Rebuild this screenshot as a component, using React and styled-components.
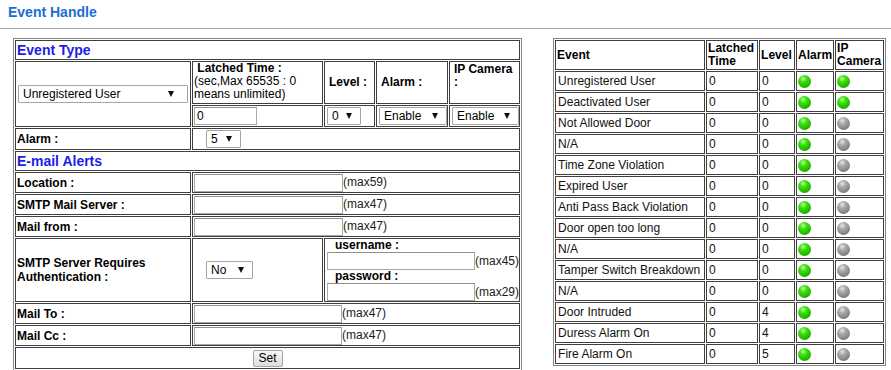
import React from "react";
import styled, { createGlobalStyle } from "styled-components";

const events = [
  { name: "Unregistered User", time: 0, level: 0, alarm: true, camera: true },
  { name: "Deactivated User", time: 0, level: 0, alarm: true, camera: true },
  { name: "Not Allowed Door", time: 0, level: 0, alarm: true, camera: false },
  { name: "N/A", time: 0, level: 0, alarm: true, camera: false },
  { name: "Time Zone Violation", time: 0, level: 0, alarm: true, camera: false },
  { name: "Expired User", time: 0, level: 0, alarm: true, camera: false },
  { name: "Anti Pass Back Violation", time: 0, level: 0, alarm: true, camera: false },
  { name: "Door open too long", time: 0, level: 0, alarm: true, camera: false },
  { name: "N/A", time: 0, level: 0, alarm: true, camera: false },
  { name: "Tamper Switch Breakdown", time: 0, level: 0, alarm: true, camera: false },
  { name: "N/A", time: 0, level: 0, alarm: true, camera: false },
  { name: "Door Intruded", time: 0, level: 4, alarm: true, camera: false },
  { name: "Duress Alarm On", time: 0, level: 4, alarm: true, camera: false },
  { name: "Fire Alarm On", time: 0, level: 5, alarm: true, camera: false },
];

const mailFields = [
  { label: "Location :", max: 59 },
  { label: "SMTP Mail Server :", max: 47 },
  { label: "Mail from :", max: 47 },
];

const FakeSelect = ({ value, width, padRight, offset }) => (
  <SelectBox $w={width} $pr={padRight} $ml={offset}>
    <span>{value}</span>
    <Arrow />
  </SelectBox>
);

const App = () => {
  return (
    <>
      <GlobalStyle />
      <Header>
        <Title>Event Handle</Title>
      </Header>

      <Content>
        <FormTable>
          <colgroup>
            <col style={{ width: 176 }} />
            <col style={{ width: 131 }} />
            <col style={{ width: 51 }} />
            <col style={{ width: 72 }} />
            <col style={{ width: 71 }} />
          </colgroup>
          <tbody>
            <Row $h={20}>
              <SectionCell colSpan={5}>Event Type</SectionCell>
            </Row>
            <Row $h={43}>
              <Cell rowSpan={2}>
                <FakeSelect value="Unregistered User" width={170} padRight={13} offset={1} />
              </Cell>
              <HeadCell $top $plain>
                <Bold>&nbsp;Latched Time :</Bold>
                <br />
                (sec,Max 65535 : 0 means unlimited)
              </HeadCell>
              <HeadCell>Level :</HeadCell>
              <HeadCell>Alarm :</HeadCell>
              <HeadCell $top>IP Camera :</HeadCell>
            </Row>
            <Row $h={22}>
              <Cell>
                <TextInput $w={63} $h={18} defaultValue="0" />
              </Cell>
              <Cell>
                <FakeSelect value="0" width={34} padRight={8} offset={1} />
              </Cell>
              <Cell>
                <FakeSelect value="Enable" width={68} padRight={8} offset={1} />
              </Cell>
              <Cell>
                <FakeSelect value="Enable" width={67} padRight={8} offset={1} />
              </Cell>
            </Row>
            <Row $h={22}>
              <LabelCell>Alarm :</LabelCell>
              <Cell colSpan={4}>
                <FakeSelect value="5" width={35} padRight={8} offset={12} />
              </Cell>
            </Row>
            <Row $h={20}>
              <SectionCell colSpan={5}>E-mail Alerts</SectionCell>
            </Row>
            {mailFields.map((f) => (
              <Row $h={21} key={f.label}>
                <LabelCell>{f.label}</LabelCell>
                <Cell colSpan={4}>
                  <TextInput $w={149} />
                  <Hint>(max{f.max})</Hint>
                </Cell>
              </Row>
            ))}
            <Row $h={64}>
              <LabelCell $wrap>
                SMTP Server Requires
                <br />
                Authentication :
              </LabelCell>
              <Cell>
                <FakeSelect value="No" width={47} padRight={8} offset={12} />
              </Cell>
              <AuthCell colSpan={3}>
                <AuthLabel>username :</AuthLabel>
                <FieldLine>
                  <TextInput $w={148} />
                  <Hint>(max45)</Hint>
                </FieldLine>
                <AuthLabel>password :</AuthLabel>
                <FieldLine>
                  <TextInput $w={148} />
                  <Hint>(max29)</Hint>
                </FieldLine>
              </AuthCell>
            </Row>
            <Row $h={21}>
              <LabelCell>Mail To :</LabelCell>
              <Cell colSpan={4}>
                <TextInput $w={148} />
                <Hint>(max47)</Hint>
              </Cell>
            </Row>
            <Row $h={21}>
              <LabelCell>Mail Cc :</LabelCell>
              <Cell colSpan={4}>
                <TextInput $w={148} />
                <Hint>(max47)</Hint>
              </Cell>
            </Row>
            <Row $h={22}>
              <Cell colSpan={5} $center>
                <SetButton>Set</SetButton>
              </Cell>
            </Row>
          </tbody>
        </FormTable>

        <StatusTable>
          <colgroup>
            <col style={{ width: 150 }} />
            <col style={{ width: 52 }} />
            <col style={{ width: 36 }} />
            <col style={{ width: 38 }} />
            <col style={{ width: 49 }} />
          </colgroup>
          <thead>
            <Row $h={30}>
              <StatusHead>Event</StatusHead>
              <StatusHead>
                Latched
                <br />
                Time
              </StatusHead>
              <StatusHead>Level</StatusHead>
              <StatusHead>Alarm</StatusHead>
              <StatusHead>
                IP
                <br />
                Camera
              </StatusHead>
            </Row>
          </thead>
          <tbody>
            {events.map((e, i) => (
              <Row $h={20} key={i}>
                <StatusCell>{e.name}</StatusCell>
                <StatusCell>{e.time}</StatusCell>
                <StatusCell>{e.level}</StatusCell>
                <LedCell>
                  <Led $on={e.alarm} />
                </LedCell>
                <LedCell>
                  <Led $on={e.camera} />
                </LedCell>
              </Row>
            ))}
          </tbody>
        </StatusTable>
      </Content>
    </>
  );
};

const GlobalStyle = createGlobalStyle`
  body {
    margin: 0;
    background: #fff;
    font-family: "Liberation Sans", Arial, sans-serif;
    font-size: 12px;
    color: #000;
  }
`;

const Header = styled.div`
  box-sizing: border-box;
  height: 29px;
  padding: 4px 8px 0;
  border-bottom: 1px solid #a4a4a4;
`;

const Title = styled.h1`
  margin: 0;
  font-size: 14px;
  line-height: 16px;
  font-weight: bold;
  color: #1e6dd5;
`;

const Content = styled.div`
  display: flex;
  align-items: flex-start;
  gap: 31px;
  padding: 9px 0 0 13px;
`;

const FormTable = styled.table`
  width: 509px;
  table-layout: fixed;
  border-collapse: separate;
  border-spacing: 1px;
  border: 1px solid #858585;
  font-size: 12px;
  line-height: 14px;
`;

const StatusTable = styled(FormTable)`
  width: 333px;
`;

const Row = styled.tr`
  height: ${(p) => p.$h}px;
`;

const Cell = styled.td`
  border: 1px solid #3f3f3f;
  padding: 0 1px;
  vertical-align: ${(p) => (p.$top ? "top" : "middle")};
  text-align: ${(p) => (p.$center ? "center" : "left")};
  white-space: ${(p) => (p.$wrap ? "normal" : "nowrap")};
`;

const SectionCell = styled(Cell)`
  font-size: 14px;
  line-height: 16px;
  font-weight: bold;
  color: #1d1de6;
`;

const HeadCell = styled(Cell)`
  padding: ${(p) => (p.$top && !p.$plain ? "1px 1px 0 4px" : p.$plain ? "0 1px" : "0 1px 0 4px")};
  font-weight: ${(p) => (p.$plain ? "normal" : "bold")};
  line-height: 13px;
  white-space: normal;
`;

const LabelCell = styled(Cell)`
  font-weight: bold;
`;

const AuthCell = styled(Cell)`
  padding: 0 1px 0 2px;
`;

const AuthLabel = styled.div`
  padding-left: 8px;
  font-weight: bold;
  line-height: 13px;
`;

const FieldLine = styled.div`
  display: flex;
  align-items: center;
  height: 18px;
`;

const Bold = styled.span`
  font-weight: bold;
`;

const Hint = styled.span`
  color: #1a1a1a;
`;

const TextInput = styled.input`
  box-sizing: border-box;
  width: ${(p) => p.$w}px;
  height: ${(p) => p.$h || 18}px;
  margin: 0;
  padding: 0 2px;
  border: 1px solid #a9a9a9;
  border-top-color: #8f8f8f;
  font-family: inherit;
  font-size: 12px;
  vertical-align: middle;
  background: #fff;
`;

const SelectBox = styled.div`
  box-sizing: border-box;
  display: inline-flex;
  align-items: center;
  justify-content: space-between;
  width: ${(p) => p.$w}px;
  height: 18px;
  margin-left: ${(p) => p.$ml || 0}px;
  padding: 0 ${(p) => p.$pr}px 0 4px;
  border: 1px solid #a6a6a6;
  border-radius: 1px;
  background: #fff;
  color: #000;
  font-size: 12px;
  vertical-align: middle;
`;

const Arrow = styled.span`
  width: 0;
  height: 0;
  border-left: 3.5px solid transparent;
  border-right: 3.5px solid transparent;
  border-top: 6px solid #111;
`;

const SetButton = styled.button`
  box-sizing: border-box;
  height: 17px;
  padding: 0 5px;
  border: 1px solid #a6a6a6;
  border-radius: 2px;
  background: linear-gradient(#f7f7f7, #dddddd);
  font-family: inherit;
  font-size: 12px;
  line-height: 14px;
  color: #000;
`;

const StatusHead = styled.th`
  border: 1px solid #3f3f3f;
  padding: 0 1px;
  text-align: left;
  vertical-align: middle;
  white-space: nowrap;
  font-weight: bold;
  line-height: 13px;
`;

const StatusCell = styled.td`
  border: 1px solid #3f3f3f;
  padding: 2px 2px;
  white-space: nowrap;
  color: #111;
`;

const LedCell = styled(StatusCell)`
  padding: 0 1px;
  vertical-align: middle;
`;

const Led = styled.span`
  display: block;
  width: 13px;
  height: 13px;
  border-radius: 50%;
  background: ${(p) =>
    p.$on
      ? "radial-gradient(circle at 40% 28%, #b8ff9c 0%, #3fe010 28%, #22c000 60%, #128200 100%)"
      : "radial-gradient(circle at 40% 28%, #e6e6e6 0%, #a8a8a8 30%, #8a8a8a 62%, #555 100%)"};
`;

export default App;
